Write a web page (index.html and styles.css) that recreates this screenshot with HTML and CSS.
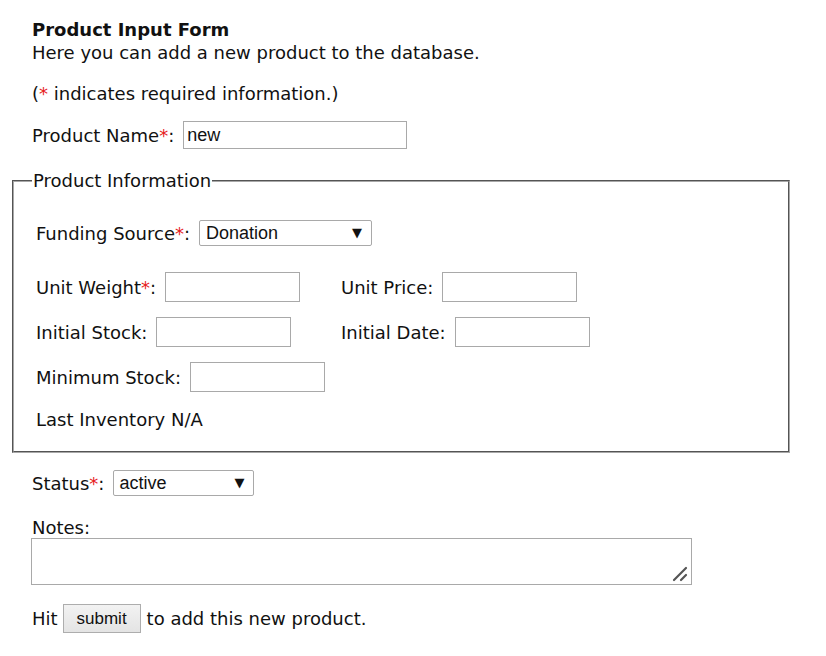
FILE: index.html
```html
<!DOCTYPE html>
<html>
<head>
<meta charset="utf-8">
<link rel="stylesheet" href="styles.css">
</head>
<body>
<div class="page">
  <div class="title">Product Input Form</div>
  <div class="intro">Here you can add a new product to the database.</div>
  <div class="note">(<span class="req">*</span> indicates required information.)</div>
  <div class="line name-row">
    <label class="lbl">Product Name<span class="req">*</span>:</label>
    <input class="text name-input" type="text" value="new">
  </div>
  <fieldset class="info">
    <legend class="legend">Product Information</legend>
    <div class="line funding-row">
      <label class="lbl">Funding Source<span class="req">*</span>:</label>
      <span class="select-wrap funding-sel">
        <select class="select"><option>Donation</option></select>
        <span class="arrow">&#9660;</span>
      </span>
    </div>
    <div class="grid">
      <div class="cell"><label class="lbl">Unit Weight<span class="req">*</span>:</label><input class="text small" type="text"></div>
      <div class="cell"><label class="lbl">Unit Price:</label><input class="text small" type="text"></div>
      <div class="cell"><label class="lbl">Initial Stock:</label><input class="text small" type="text"></div>
      <div class="cell"><label class="lbl">Initial Date:</label><input class="text small" type="text"></div>
      <div class="cell"><label class="lbl">Minimum Stock:</label><input class="text small" type="text"></div>
    </div>
    <div class="last">Last Inventory N/A</div>
  </fieldset>
  <div class="line status-row">
    <label class="lbl">Status<span class="req">*</span>:</label>
    <span class="select-wrap status-sel">
      <select class="select"><option>active</option></select>
      <span class="arrow">&#9660;</span>
    </span>
  </div>
  <div class="notes-label">Notes:</div>
  <div class="notes-wrap">
    <textarea class="notes"></textarea>
    <svg class="grip" width="16" height="16" viewBox="0 0 16 16"><path d="M2 14 L14 2 M9 14 L14 9" stroke="#555" stroke-width="2.2" stroke-linecap="round" fill="none"/></svg>
  </div>
  <div class="line submit-row">
    <span>Hit</span>
    <button class="btn" type="button">submit</button>
    <span>to add this new product.</span>
  </div>
</div>
</body>
</html>
```
FILE: styles.css
```css
html, body {
  margin: 0;
  padding: 0;
  background: #fff;
}
body {
  font-family: "DejaVu Sans", Verdana, sans-serif;
  font-size: 18px;
  line-height: 21px;
  color: #111;
}
.page {
  padding: 19px 0 0 32px;
  display: flex;
  flex-direction: column;
  align-items: flex-start;
}
.title {
  font-weight: bold;
}
.intro {
  margin-top: 2px;
}
.note {
  margin-top: 20px;
}
.req {
  color: #e62020;
}
.line {
  display: flex;
  align-items: center;
}
.lbl {
  margin-right: 9px;
}
.name-row {
  margin-top: 17px;
}
.text {
  box-sizing: border-box;
  border: 1px solid #a9a9a9;
  background: #fff;
  font-family: "Liberation Sans", Arial, sans-serif;
  font-size: 18px;
  padding: 0 3px;
  margin: 0;
  outline: none;
  color: #111;
}
.name-input {
  width: 224px;
  height: 28px;
}
.small {
  width: 135px;
  height: 30px;
}
.info {
  margin: 22px 0 0 -20px;
  box-sizing: border-box;
  width: 778px;
  border: 2px groove #a8a8a8;
  padding: 12px 22px 21px 22px;
  min-width: 0;
}
.legend {
  padding: 0 1px;
  margin-left: -4px;
  line-height: 20px;
}
.funding-row {
  margin-top: 17px;
}
.select-wrap {
  position: relative;
  display: inline-block;
}
.select {
  -webkit-appearance: none;
  appearance: none;
  box-sizing: border-box;
  border: 1px solid #a9a9a9;
  border-radius: 2px;
  background: #fff;
  font-family: "Liberation Sans", Arial, sans-serif;
  font-size: 18px;
  padding: 0 6px;
  margin: 0;
  height: 26px;
  color: #111;
  outline: none;
  display: block;
}
.funding-sel .select {
  width: 173px;
}
.status-sel .select {
  width: 141px;
  padding-left: 5px;
}
.arrow {
  position: absolute;
  right: 10px;
  top: 5px;
  font-size: 13px;
  line-height: 16px;
  color: #111;
  pointer-events: none;
}
.grid {
  display: grid;
  grid-template-columns: 305px auto;
  row-gap: 15px;
  margin-top: 26px;
}
.cell {
  display: flex;
  align-items: center;
}
.last {
  margin-top: 17px;
}
.status-row {
  margin-top: 17px;
}
.notes-label {
  margin-top: 21px;
}
.notes-wrap {
  position: relative;
  margin-left: -1px;
}
.notes {
  display: block;
  box-sizing: border-box;
  width: 661px;
  height: 47px;
  border: 1px solid #a9a9a9;
  resize: none;
  margin: 0;
  outline: none;
}
.grip {
  position: absolute;
  right: 4px;
  bottom: 3px;
}
.submit-row {
  margin-top: 19px;
}
.btn {
  margin: 0 6px 0 5px;
  box-sizing: border-box;
  height: 29px;
  width: 78px;
  border: 1px solid #adadad;
  border-radius: 0;
  background: linear-gradient(#f2f2f2, #e4e4e4);
  font-family: "Liberation Sans", Arial, sans-serif;
  font-size: 17px;
  color: #111;
  padding: 0;
}
```
